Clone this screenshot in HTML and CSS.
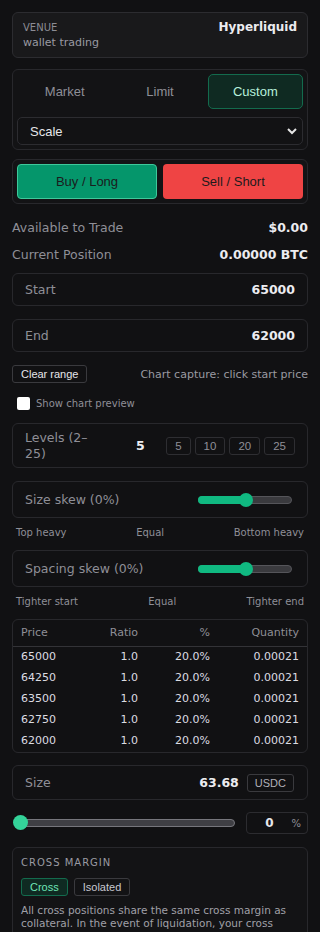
FILE: index.html
```html
<!DOCTYPE html>
<html lang="en">
<head>
    <meta charset="UTF-8">
    <meta name="viewport" content="width=device-width, initial-scale=1.0">
    <title>Trade</title>
    <link rel="stylesheet" href="styles.css">
</head>
<body>
    <div class="panel">
        <div class="venue">
            <div>
                <div class="venue-label">VENUE</div>
                <div class="venue-sub">wallet trading</div>
            </div>
            <div class="venue-name">Hyperliquid</div>
        </div>

        <div class="card order-type">
            <div class="tabs">
                <button class="tab">Market</button>
                <button class="tab">Limit</button>
                <button class="tab active">Custom</button>
            </div>
            <div class="select">
                <span>Scale</span>
                <svg width="12" height="12" viewBox="0 0 12 12"><path d="M2 4l4 4 4-4" fill="none" stroke="#e5e5e5" stroke-width="2"/></svg>
            </div>
        </div>

        <div class="card sides">
            <button class="side buy">Buy / Long</button>
            <button class="side sell">Sell / Short</button>
        </div>

        <div class="info-row first">
            <span>Available to Trade</span>
            <strong>$0.00</strong>
        </div>
        <div class="info-row">
            <span>Current Position</span>
            <strong>0.00000 BTC</strong>
        </div>

        <div class="field start">
            <span>Start</span>
            <strong>65000</strong>
        </div>
        <div class="field end">
            <span>End</span>
            <strong>62000</strong>
        </div>

        <div class="range-row">
            <button class="small-btn">Clear range</button>
            <span class="hint">Chart capture: click start price</span>
        </div>

        <label class="check-row">
            <span class="checkbox"></span>
            Show chart preview
        </label>

        <div class="field levels">
            <span class="levels-label">Levels (2–<wbr>25)</span>
            <strong class="levels-value">5</strong>
            <div class="presets">
                <button class="preset">5</button>
                <button class="preset">10</button>
                <button class="preset">20</button>
                <button class="preset">25</button>
            </div>
        </div>

        <div class="field skew size-skew">
            <span>Size skew (0%)</span>
            <div class="mini-slider">
                <div class="mini-fill"></div>
                <div class="mini-thumb"></div>
            </div>
        </div>
        <div class="scale-labels">
            <span>Top heavy</span>
            <span>Equal</span>
            <span>Bottom heavy</span>
        </div>

        <div class="field skew spacing-skew">
            <span>Spacing skew (0%)</span>
            <div class="mini-slider">
                <div class="mini-fill"></div>
                <div class="mini-thumb"></div>
            </div>
        </div>
        <div class="scale-labels">
            <span>Tighter start</span>
            <span>Equal</span>
            <span>Tighter end</span>
        </div>

        <div class="table-wrap">
            <table>
                <thead>
                    <tr><th>Price</th><th>Ratio</th><th>%</th><th>Quantity</th></tr>
                </thead>
                <tbody>
                    <tr><td>65000</td><td>1.0</td><td>20.0%</td><td>0.00021</td></tr>
                    <tr><td>64250</td><td>1.0</td><td>20.0%</td><td>0.00021</td></tr>
                    <tr><td>63500</td><td>1.0</td><td>20.0%</td><td>0.00021</td></tr>
                    <tr><td>62750</td><td>1.0</td><td>20.0%</td><td>0.00021</td></tr>
                    <tr><td>62000</td><td>1.0</td><td>20.0%</td><td>0.00021</td></tr>
                </tbody>
            </table>
        </div>

        <div class="field size">
            <span>Size</span>
            <strong class="size-value">63.68</strong>
            <button class="unit">USDC</button>
        </div>

        <div class="size-slider-row">
            <div class="big-slider">
                <div class="big-thumb"></div>
            </div>
            <div class="pct-box">
                <strong>0</strong>
                <span>%</span>
            </div>
        </div>

        <div class="card margin">
            <div class="margin-title">CROSS MARGIN</div>
            <div class="margin-btns">
                <button class="mode active">Cross</button>
                <button class="mode">Isolated</button>
            </div>
            <p>All cross positions share the same cross margin as collateral. In the event of liquidation, your cross margin balance and any remaining open positions under assets in this mode may be forfeited.</p>
        </div>
    </div>
</body>
</html>
```

FILE: styles.css
```css
* {
    margin: 0;
    padding: 0;
    box-sizing: border-box;
}

body {
    background-color: #111113;
    color: #e6e6ea;
    font-family: "DejaVu Sans", sans-serif;
    padding: 12px;
}

button {
    font-family: "Liberation Sans", Arial, sans-serif;
    background: none;
    cursor: pointer;
}

.card {
    background: #131315;
    border: 1px solid #28282c;
    border-radius: 6px;
}

.venue {
    height: 46px;
    background: #19191b;
    border: 1px solid #2c2c30;
    border-radius: 6px;
    padding: 7px 10px 0 10px;
    display: flex;
    justify-content: space-between;
    align-items: flex-start;
}

.venue-label {
    font-size: 10px;
    color: #8c8c94;
    line-height: 12px;
    margin-top: 2px;
}

.venue-sub {
    font-size: 11px;
    color: #9a9aa2;
    line-height: 14px;
    margin-top: 2px;
}

.venue-name {
    font-size: 12px;
    font-weight: bold;
    color: #ececf0;
    line-height: 14px;
}

.order-type {
    margin-top: 11px;
    padding: 4px;
}

.tabs {
    display: flex;
}

.tab {
    flex: 1;
    height: 35px;
    border: 1px solid transparent;
    border-radius: 5px;
    color: #8f8f97;
    font-size: 13px;
}

.tab.active {
    background: #0f2a22;
    border-color: #136b4d;
    color: #b8f0dc;
}

.select {
    margin-top: 8px;
    height: 28px;
    border: 1px solid #2c2c30;
    border-radius: 5px;
    background: #121214;
    display: flex;
    justify-content: space-between;
    align-items: center;
    padding: 0 4px 0 12px;
    font-family: "Liberation Sans", Arial, sans-serif;
    font-size: 13px;
    color: #e6e6ea;
}

.sides {
    margin-top: 9px;
    padding: 4px;
    display: flex;
    gap: 6px;
}

.side {
    flex: 1;
    height: 35px;
    border-radius: 4px;
    border: 1px solid transparent;
    font-size: 13px;
    color: #1b1b1d;
}

.side.buy {
    background: #05966b;
    border-color: #3ec89a;
}

.side.sell {
    background: #ef4444;
}

.info-row {
    height: 27px;
    display: flex;
    justify-content: space-between;
    align-items: center;
    font-size: 12.5px;
    color: #8f8f97;
}

.info-row.first {
    margin-top: 10px;
}

.info-row strong {
    color: #ececf0;
    font-size: 12.5px;
}

.field {
    border: 1px solid #28282c;
    border-radius: 6px;
    display: flex;
    align-items: center;
    padding: 0 12px;
    font-size: 12.5px;
    color: #8f8f97;
}

.field strong {
    color: #ececf0;
    margin-left: auto;
    font-size: 12.5px;
}

.field.start {
    margin-top: 5px;
    height: 33px;
}

.field.end {
    margin-top: 13px;
    height: 33px;
}

.range-row {
    margin-top: 13px;
    display: flex;
    justify-content: space-between;
    align-items: center;
}

.small-btn {
    height: 18px;
    padding: 0 8px;
    border: 1px solid #3a3a3e;
    border-radius: 3px;
    color: #e6e6ea;
    font-size: 11px;
}

.hint {
    font-size: 11px;
    color: #9a9aa2;
}

.check-row {
    margin-top: 14px;
    height: 13px;
    display: flex;
    align-items: center;
    gap: 6px;
    padding-left: 5px;
    font-size: 10px;
    color: #8f8f97;
}

.checkbox {
    width: 13px;
    height: 13px;
    border-radius: 2px;
    background: #fff;
}

.field.levels {
    margin-top: 13px;
    height: 45px;
}

.levels-label {
    width: 72px;
    line-height: 16px;
}

.field .levels-value {
    margin-left: 39px;
    width: 20px;
}

.presets {
    margin-left: auto;
    display: flex;
    gap: 4px;
    margin-right: 0;
}

.preset {
    height: 18px;
    min-width: 24px;
    padding: 0 8px;
    border: 1px solid #2e2e32;
    border-radius: 3px;
    color: #8f8f97;
    font-size: 11.5px;
}

.field.skew {
    height: 37px;
}

.size-skew {
    margin-top: 13px;
}

.spacing-skew {
    margin-top: 11px;
}

.mini-slider {
    margin-left: auto;
    margin-right: 3px;
    width: 94px;
    height: 8px;
    border-radius: 4px;
    background: #3a3a3e;
    border: 1px solid #55555a;
    position: relative;
}

.mini-fill {
    width: 50%;
    height: 8px;
    margin: -1px 0 0 -1px;
    border-radius: 4px 0 0 4px;
    background: #10b981;
}

.mini-thumb {
    position: absolute;
    left: 40px;
    top: -4px;
    width: 14px;
    height: 14px;
    border-radius: 50%;
    background: #10b981;
}

.scale-labels {
    margin-top: 8px;
    padding: 0 4px;
    display: flex;
    justify-content: space-between;
    font-size: 10px;
    color: #8f8f97;
    line-height: 13px;
}

.table-wrap {
    margin-top: 11px;
    border: 1px solid #28282c;
    border-radius: 6px;
    padding-bottom: 1px;
}

table {
    width: 100%;
    border-collapse: collapse;
    table-layout: fixed;
    font-size: 11px;
}

th {
    height: 26px;
    font-weight: normal;
    color: #8f8f97;
    text-align: right;
    padding: 0 8px;
    border-bottom: 1px solid #333337;
}

td {
    height: 21px;
    text-align: right;
    padding: 0 8px;
    color: #dcdce2;
}

th:first-child, td:first-child {
    text-align: left;
    width: 66px;
}

th:nth-child(2) {
    width: 67px;
}

th:nth-child(3) {
    width: 72px;
}

.field.size {
    margin-top: 12px;
    height: 35px;
}

.field .size-value {
    margin-right: 8px;
}

.unit {
    height: 18px;
    padding: 0 7px;
    border: 1px solid #3a3a3e;
    border-radius: 3px;
    color: #b0b0b8;
    font-size: 11px;
    margin-right: 1px;
}

.size-slider-row {
    margin-top: 12px;
    display: flex;
    align-items: center;
    gap: 11px;
}

.big-slider {
    margin-left: 2px;
    width: 221px;
    height: 8px;
    border-radius: 4px;
    background: #3f3f44;
    border: 1px solid #76767c;
    position: relative;
}

.big-thumb {
    position: absolute;
    left: -2px;
    top: -5px;
    width: 15px;
    height: 15px;
    border-radius: 50%;
    background: #34d399;
}

.pct-box {
    flex: 1;
    height: 22px;
    border: 1px solid #2c2c30;
    border-radius: 4px;
    display: flex;
    align-items: center;
    justify-content: flex-end;
    gap: 18px;
    padding-right: 6px;
    font-size: 12px;
}

.pct-box span {
    color: #8f8f97;
    font-size: 10px;
}

.margin {
    margin-top: 13px;
    padding: 7px 8px 0 8px;
}

.margin-title {
    font-size: 10px;
    letter-spacing: 1px;
    color: #9a9aa2;
    line-height: 16px;
}

.margin-btns {
    margin-top: 7px;
    display: flex;
    gap: 6px;
}

.mode {
    height: 18px;
    padding: 0 8px;
    border: 1px solid #3a3a3e;
    border-radius: 3px;
    color: #c8c8d0;
    font-size: 11px;
}

.mode.active {
    background: #0f2a22;
    border-color: #136b4d;
    color: #6ee7b7;
}

.margin p {
    margin-top: 8px;
    font-size: 10.5px;
    line-height: 13px;
    color: #a0a0a8;
}
```
